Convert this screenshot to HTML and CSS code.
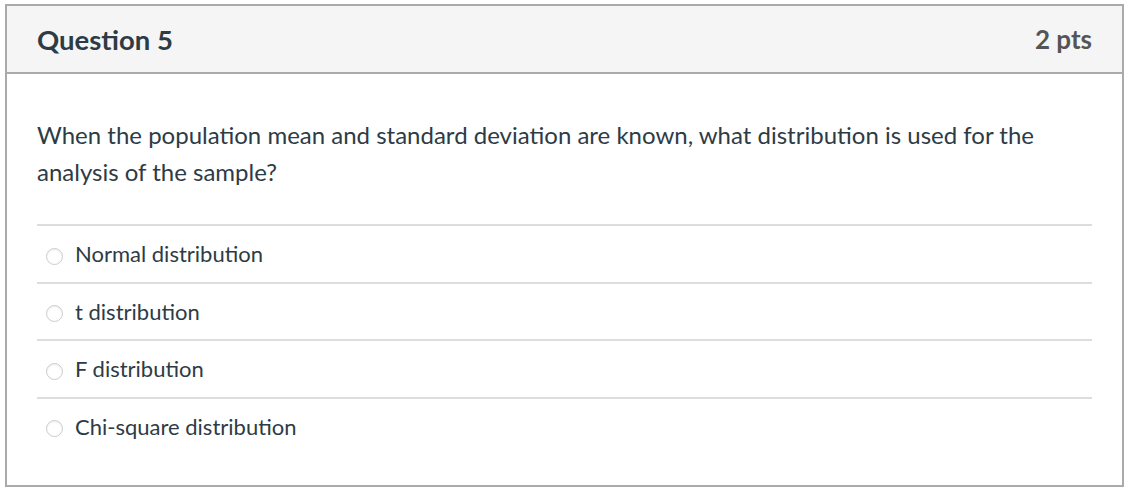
FILE: index.html
```html
<!DOCTYPE html>
<html>
<head>
<meta charset="utf-8">
<link rel="stylesheet" href="styles.css">
</head>
<body>
<div class="question">
  <div class="q-header">
    <h2 class="q-title">Question 5</h2>
    <div class="q-points">2 pts</div>
  </div>
  <div class="q-body">
    <p class="q-text">When the population mean and standard deviation are known, what distribution is used for the analysis of the sample?</p>
    <div class="answers">
      <label class="answer"><span class="radio"></span><span class="answer-label">Normal distribution</span></label>
      <label class="answer"><span class="radio"></span><span class="answer-label">t distribution</span></label>
      <label class="answer"><span class="radio"></span><span class="answer-label">F distribution</span></label>
      <label class="answer"><span class="radio"></span><span class="answer-label">Chi-square distribution</span></label>
    </div>
  </div>
</div>
</body>
</html>
```
FILE: styles.css
```css
html, body {
  margin: 0;
  padding: 0;
  background: #fff;
}
body {
  padding: 4px 0 0 5px;
  font-family: Lato, "Liberation Sans", sans-serif;
  color: #2d3b45;
}
.question {
  width: 1115px;
  height: 479px;
  border: 2px solid #aaaaaa;
  display: flex;
  flex-direction: column;
}
.q-header {
  height: 66px;
  background: #f5f5f5;
  border-bottom: 2px solid #aaaaaa;
  display: flex;
  align-items: center;
  justify-content: space-between;
  padding: 0 30px;
}
.q-title {
  margin: 0;
  font-size: 27.5px;
  font-weight: 700;
  color: #2d3b45;
}
.q-points {
  font-size: 26px;
  font-weight: 700;
  color: #555;
}
.q-body {
  padding: 0 30px;
}
.q-text {
  margin: 42px 0 0;
  font-size: 24px;
  line-height: 37px;
}
.answers {
  margin-top: 34px;
}
.answer {
  display: flex;
  align-items: center;
  gap: 12px;
  height: 55.5px;
  padding-bottom: 1px;
  box-sizing: content-box;
  border-top: 2px solid #dddddd;
  font-size: 22px;
}
.answer + .answer {
  margin-top: -1px;
}
.radio {
  width: 17px;
  height: 17px;
  box-sizing: border-box;
  border-radius: 50%;
  border: 1px solid #cccccc;
  background: #fff;
  box-shadow: inset 0 1px 2px rgba(0,0,0,0.08);
  margin-left: 9px;
  margin-top: 5px;
}
.answer-label {
  color: #2d3b45;
}
```
